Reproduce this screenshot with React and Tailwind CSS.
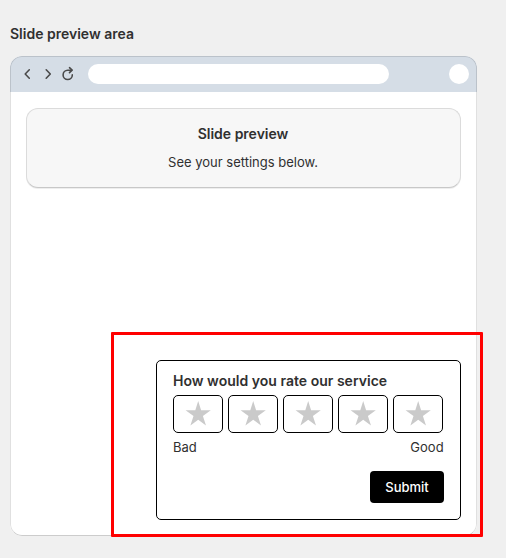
const STARS = [1, 2, 3, 4, 5];

function BrowserBar() {
  return (
    <div className="flex h-9 items-center bg-[#d5dde6] pr-2 pl-3">
      <svg className="h-5 w-[66px] shrink-0" viewBox="0 0 66 20" fill="none" stroke="#4a4a4a" strokeWidth="1.6" strokeLinecap="round" strokeLinejoin="round">
        <path d="M7.3 5.8 3.2 10l4.1 4.2" />
        <path d="M24.2 5.8 28.3 10l-4.1 4.2" />
        <path d="M50.3 10.9a4.6 4.6 0 1 1-4.6-4.6h4" />
        <path d="M47.5 3.7 50.1 6.2l-2.6 2.5" />
      </svg>
      <div className="h-5 w-[301px] rounded-full bg-white" />
      <div className="ml-auto size-5 rounded-full bg-white" />
    </div>
  );
}

function Rating() {
  return (
    <div className="h-[160px] w-[305px] rounded-[5px] border border-black bg-white px-4 pt-[10px]">
      <h3 className="text-[14px] leading-5 font-semibold tracking-[0.02px] whitespace-nowrap">How would you rate our service</h3>
      <div className="mt-1 flex gap-[5px]">
        {STARS.map((n) => (
          <div key={n} className="flex h-[38px] w-[50px] shrink-0 justify-center rounded-[5px] border border-black pt-[5px]">
            <svg className="h-[25px] w-[26px]" viewBox="0 0 26 25" fill="#cacaca">
              <path d="M13.2 0 16.1 9.3H25.8L17.9 14.9 21 24.6 13.2 18.7 5.4 24.6 8.5 14.9.6 9.3H10.3Z" />
            </svg>
          </div>
        ))}
      </div>
      <div className="mt-1 mr-[0.4px] flex justify-between text-[13px] leading-5">
        <span>Bad</span>
        <span>Good</span>
      </div>
      <div className="mt-[14px] flex justify-end">
        <button className="h-8 w-[74px] rounded-[4px] bg-black pt-px text-[13px] font-medium text-white">Submit</button>
      </div>
    </div>
  );
}

export default function App() {
  return (
    <main className="relative h-[558px] w-[506px] overflow-hidden bg-[#f0f0f0] pt-6 pl-[10px] font-['Inter',sans-serif] text-[#303030]">
      <h1 className="text-[14px] leading-5 font-semibold">Slide preview area</h1>
      <section className="relative mt-3 flex h-[480px] w-[467px] flex-col overflow-hidden rounded-xl bg-white">
        <BrowserBar />
        <div className="flex flex-1 flex-col justify-between p-4">
          <div className="h-20 rounded-xl border border-[#dbdbdb] border-b-[#c8c8c8] bg-[#f7f7f7] pt-[15px] pr-px text-center shadow-[0_1px_0_#eeeeee]">
            <h2 className="text-[14px] leading-5 font-semibold">Slide preview</h2>
            <p className="mt-2 text-[13px] leading-5">See your settings below.</p>
          </div>
          <div className="flex justify-end">
            <Rating />
          </div>
        </div>
        <div className="pointer-events-none absolute inset-0 rounded-xl border border-black/12 border-b-black/20" />
      </section>
      <div className="pointer-events-none absolute top-[332px] left-[111px] h-[205px] w-[372px] rounded-[1px] border-3 border-[#ff0000]" />
    </main>
  );
}
